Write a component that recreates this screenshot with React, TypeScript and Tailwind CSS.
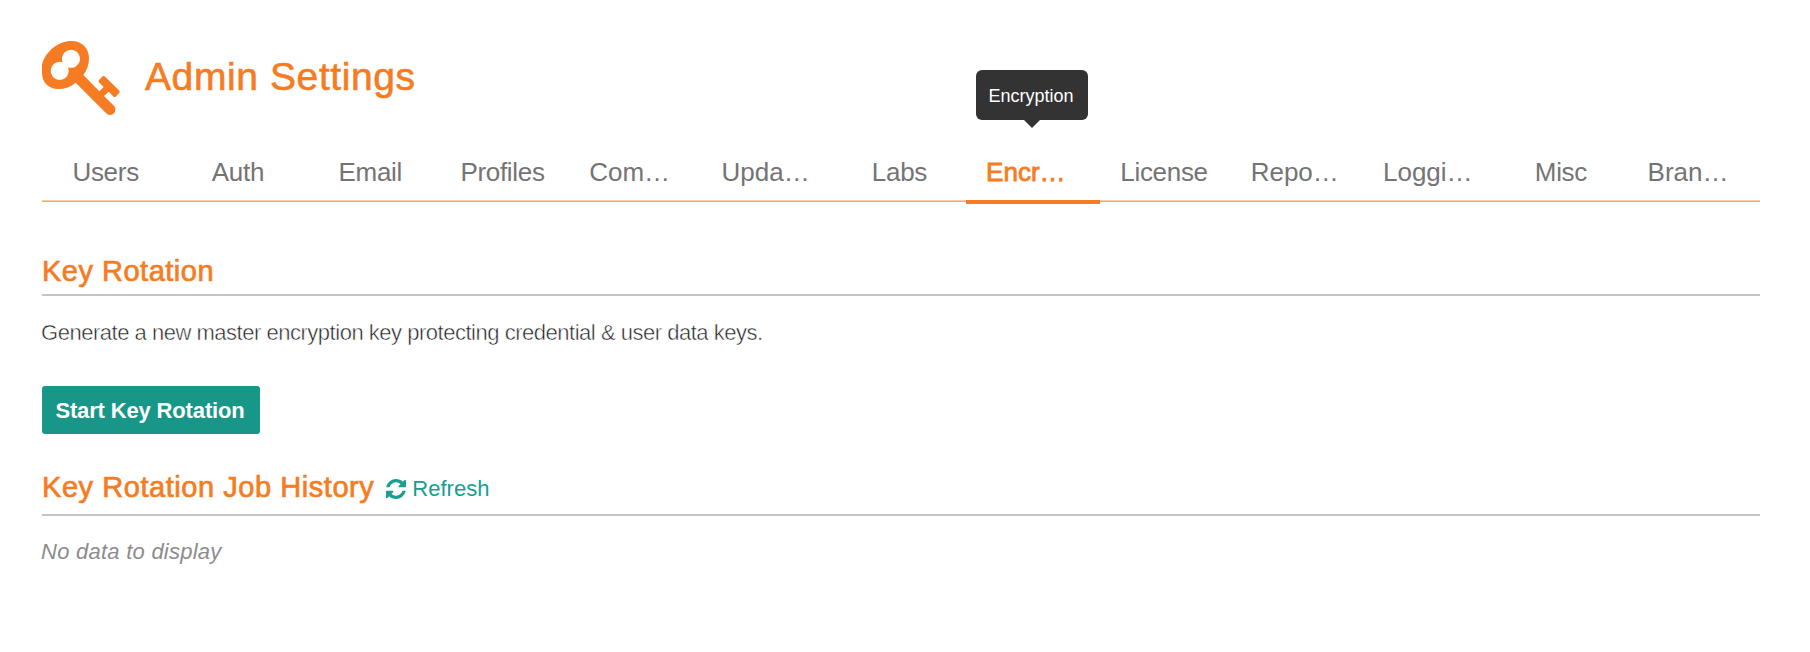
type Tab = { label: string; clipped?: boolean; tooltip?: string };

const tabs: Tab[] = [
  { label: "Users" },
  { label: "Auth" },
  { label: "Email" },
  { label: "Profiles" },
  { label: "Com…", clipped: true },
  { label: "Upda…", clipped: true },
  { label: "Labs" },
  { label: "Encr…", clipped: true, tooltip: "Encryption" },
  { label: "License" },
  { label: "Repo…", clipped: true },
  { label: "Loggi…", clipped: true },
  { label: "Misc" },
  { label: "Bran…", clipped: true },
];

function KeyLogo() {
  return (
    <svg className="h-[75px] w-[78px] shrink-0" viewBox="36 33 234 225" fill="#f57c22">
      <path
        fillRule="evenodd"
        d="M125 33C155 33 177 54 177 84C177 104 171 121 160 135L208 184L221 171L206 156Q205 153 207 150L218 139Q221 137 224 139L268 182Q270 185 268 188L257 200Q254 202 251 200L236 185L222 198L253 229Q258 235 256 242Q252 253 241 255Q235 255 230 251L137 158C122 171 105 177 85 177C56 177 36 158 36 129V105C45 64 86 33 125 33ZM98 97A27 27 0 1 0 114 112A27 27 0 1 0 98 97Z"
      />
    </svg>
  );
}

function RefreshIcon() {
  return (
    <svg className="h-[20px] w-[20px]" viewBox="0 0 1536 1536" fill="currentColor">
      <path d="M1511 928q0 5-1 7-64 268-268 434.5t-478 166.5q-146 0-282.5-55t-243.5-157l-129 129q-19 19-45 19t-45-19-19-45v-448q0-26 19-45t45-19h448q26 0 45 19t19 45-19 45l-137 137q71 66 161 102t187 36q134 0 250-65t186-179q11-17 53-117 8-23 30-23h192q13 0 22.5 9.5t9.5 22.5zm25-800v448q0 26-19 45t-45 19h-448q-26 0-45-19t-19-45 19-45l138-138q-148-137-349-137-134 0-250 65t-186 179q-11 17-53 117-8 23-30 23h-199q-13 0-22.5-9.5t-9.5-22.5v-7q65-268 270-434.5t480-166.5q146 0 284 55.5t245 156.5l130-129q19-19 45-19t45 19 19 45z" />
    </svg>
  );
}

function TabItem({ label, clipped, tooltip }: Tab) {
  const active = Boolean(tooltip);
  return (
    <li
      className={`relative h-[48px] w-[132.3px] shrink-0 ${
        clipped ? "pl-[19px] text-left" : "pr-[3px] text-center tracking-[-0.3px]"
      } ${active ? "text-[#f57c22] [-webkit-text-stroke:0.8px_#f57c22]" : "text-[#747474]"}`}
    >
      {label}
      {tooltip && (
        <>
          <span className="absolute -bottom-1 -left-px h-1 w-[134px] bg-[#f57c22]" />
          <span className="absolute -top-[82px] left-[9px] h-[50px] w-[112px] rounded-md bg-[#333333] pr-0.5 text-center text-lg leading-[52px] text-white [-webkit-text-stroke:0]">
            {tooltip}
            <svg className="absolute top-[50px] left-12 h-2 w-4" viewBox="0 0 16 8" fill="#333333">
              <path d="M0 0H16L8 8Z" />
            </svg>
          </span>
        </>
      )}
    </li>
  );
}

export default function App() {
  return (
    <main className="min-h-[652px] bg-white pt-[41px] pr-[50px] pl-[42px] font-['Liberation_Sans',Arial,sans-serif]">
      <header className="flex h-[75px] items-start">
        <KeyLogo />
        <h1 className="mt-[14px] ml-[25px] text-[39px] leading-[44px] tracking-[0.6px] text-[#f57c22] [-webkit-text-stroke:0.6px_#f57c22]">
          Admin Settings
        </h1>
      </header>

      <nav className="mt-9">
        <ul className="-ml-px flex h-[48px] text-[26px] leading-10">
          {tabs.map((tab) => (
            <TabItem key={tab.label} {...tab} />
          ))}
        </ul>
        <div className="h-0.5 border-t border-[#fbcba7] bg-[#f7a468]" />
      </nav>

      <section className="mt-[49px]">
        <h2 className="border-b-2 border-[#c4c4c4] pb-[3px] text-[29px] leading-10 tracking-[0.5px] text-[#f57c22] [-webkit-text-stroke:0.7px_#f57c22]">
          Key Rotation
        </h2>
        <p className="-ml-px mt-[22px] text-[22px] leading-[30px] tracking-[-0.48px] text-[#222222] [-webkit-text-stroke:0.5px_white]">
          Generate a new master encryption key protecting credential &amp; user data keys.
        </p>
        <button className="mt-[38px] block h-12 w-[218px] rounded-[3px] bg-[#189688] pr-0.5 pt-px text-[22px] leading-[48px] font-bold tracking-[-0.15px] text-white">
          Start Key Rotation
        </button>
      </section>

      <section className="mt-[33px]">
        <div className="flex border-b-2 border-[#c4c4c4] pb-[7px]">
          <h2 className="text-[29px] leading-10 tracking-[0.55px] text-[#f57c22] [-webkit-text-stroke:0.7px_#f57c22]">
            Key Rotation Job History
          </h2>
          <a className="ml-3 flex h-10 items-center gap-1.5 pt-[3px] text-[22px] leading-10 text-[#189f90]">
            <RefreshIcon />
            Refresh
          </a>
        </div>
        <p className="-ml-px mt-[21px] text-[22px] leading-[30px] tracking-[0.25px] text-[#8c8c8c] italic">No data to display</p>
      </section>
    </main>
  );
}
